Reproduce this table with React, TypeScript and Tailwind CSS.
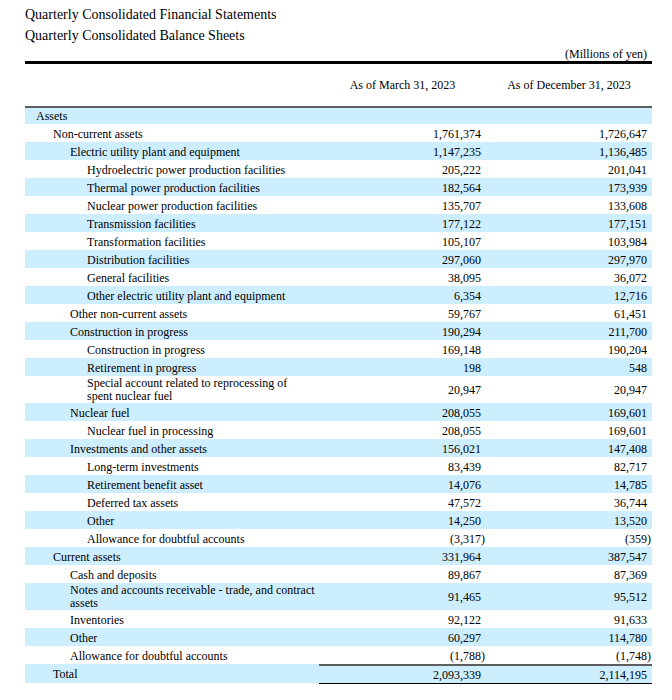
import React from "react"

type Row = {
  label: string[]
  level: number
  a: string
  b: string
}

const rows: Row[] = [
  { label: ["Assets"], level: 0, a: "", b: "" },
  { label: ["Non-current assets"], level: 1, a: "1,761,374", b: "1,726,647" },
  { label: ["Electric utility plant and equipment"], level: 2, a: "1,147,235", b: "1,136,485" },
  { label: ["Hydroelectric power production facilities"], level: 3, a: "205,222", b: "201,041" },
  { label: ["Thermal power production facilities"], level: 3, a: "182,564", b: "173,939" },
  { label: ["Nuclear power production facilities"], level: 3, a: "135,707", b: "133,608" },
  { label: ["Transmission facilities"], level: 3, a: "177,122", b: "177,151" },
  { label: ["Transformation facilities"], level: 3, a: "105,107", b: "103,984" },
  { label: ["Distribution facilities"], level: 3, a: "297,060", b: "297,970" },
  { label: ["General facilities"], level: 3, a: "38,095", b: "36,072" },
  { label: ["Other electric utility plant and equipment"], level: 3, a: "6,354", b: "12,716" },
  { label: ["Other non-current assets"], level: 2, a: "59,767", b: "61,451" },
  { label: ["Construction in progress"], level: 2, a: "190,294", b: "211,700" },
  { label: ["Construction in progress"], level: 3, a: "169,148", b: "190,204" },
  { label: ["Retirement in progress"], level: 3, a: "198", b: "548" },
  { label: ["Special account related to reprocessing of", "spent nuclear fuel"], level: 3, a: "20,947", b: "20,947" },
  { label: ["Nuclear fuel"], level: 2, a: "208,055", b: "169,601" },
  { label: ["Nuclear fuel in processing"], level: 3, a: "208,055", b: "169,601" },
  { label: ["Investments and other assets"], level: 2, a: "156,021", b: "147,408" },
  { label: ["Long-term investments"], level: 3, a: "83,439", b: "82,717" },
  { label: ["Retirement benefit asset"], level: 3, a: "14,076", b: "14,785" },
  { label: ["Deferred tax assets"], level: 3, a: "47,572", b: "36,744" },
  { label: ["Other"], level: 3, a: "14,250", b: "13,520" },
  { label: ["Allowance for doubtful accounts"], level: 3, a: "(3,317)", b: "(359)" },
  { label: ["Current assets"], level: 1, a: "331,964", b: "387,547" },
  { label: ["Cash and deposits"], level: 2, a: "89,867", b: "87,369" },
  { label: ["Notes and accounts receivable - trade, and contract", "assets"], level: 2, a: "91,465", b: "95,512" },
  { label: ["Inventories"], level: 2, a: "92,122", b: "91,633" },
  { label: ["Other"], level: 2, a: "60,297", b: "114,780" },
  { label: ["Allowance for doubtful accounts"], level: 2, a: "(1,788)", b: "(1,748)" },
]

const indent = ["pl-[11px]", "pl-[28px]", "pl-[45px]", "pl-[62px]"]

function Num({ value, width }: { value: string; width: string }) {
  const neg = value.startsWith("(")
  return (
    <div className={`${width} flex items-center justify-end pt-[1px] ${neg ? "pr-[1px]" : "pr-[5px]"}`}>
      {value}
    </div>
  )
}

export default function App() {
  return (
    <div className="min-h-[700px] bg-white text-black font-['Liberation_Serif',serif]">
      <div className="ml-[25px] w-[627px] pt-[4px]">
        <div className="text-[14px] leading-[21px]">Quarterly Consolidated Financial Statements</div>
        <div className="text-[14px] leading-[21px]">Quarterly Consolidated Balance Sheets</div>
        <div className="mt-[1px] h-[14px] text-[12px] leading-[14px] text-right pr-[5px]">(Millions of yen)</div>
        <div className="h-[3px] bg-black" />

        <div className="flex h-[44px] text-[12px] border-b-2 border-[#5e5e5e]">
          <div className="w-[294px]" />
          <div className="w-[167px] flex items-center justify-center">As of March 31, 2023</div>
          <div className="w-[166px] flex items-center justify-center">As of December 31, 2023</div>
        </div>

        <div className="text-[12px]">
          {rows.map((r, i) => {
            const two = r.label.length > 1
            const h = i === 0 ? "h-[16px]" : two ? "h-[27px]" : "h-[18px]"
            const bg = i % 2 === 0 ? "bg-[#cceeff]" : "bg-white"
            return (
              <div key={i} className={`flex ${h} ${bg}`}>
                <div className={`w-[294px] flex flex-col justify-center whitespace-nowrap ${i === 0 ? "" : "pt-[1px]"} ${two ? "leading-[13px]" : ""} ${indent[r.level]}`}>
                  {r.label.map((l, j) => (
                    <span key={j}>{l}</span>
                  ))}
                </div>
                <Num value={r.a} width="w-[167px]" />
                <Num value={r.b} width="w-[166px]" />
              </div>
            )
          })}
          <div className="flex h-[20px]">
            <div className="w-[294px] h-[19px] bg-[#cceeff] pl-[28px] flex items-center">Total</div>
            <div className="w-[333px] flex border-t-2 border-t-[#5e5e5e] border-b border-b-black bg-[#cceeff]">
              <div className="w-[167px] flex items-center justify-end pr-[5px]">2,093,339</div>
              <div className="w-[166px] flex items-center justify-end pr-[5px]">2,114,195</div>
            </div>
          </div>
        </div>
      </div>
    </div>
  )
}
